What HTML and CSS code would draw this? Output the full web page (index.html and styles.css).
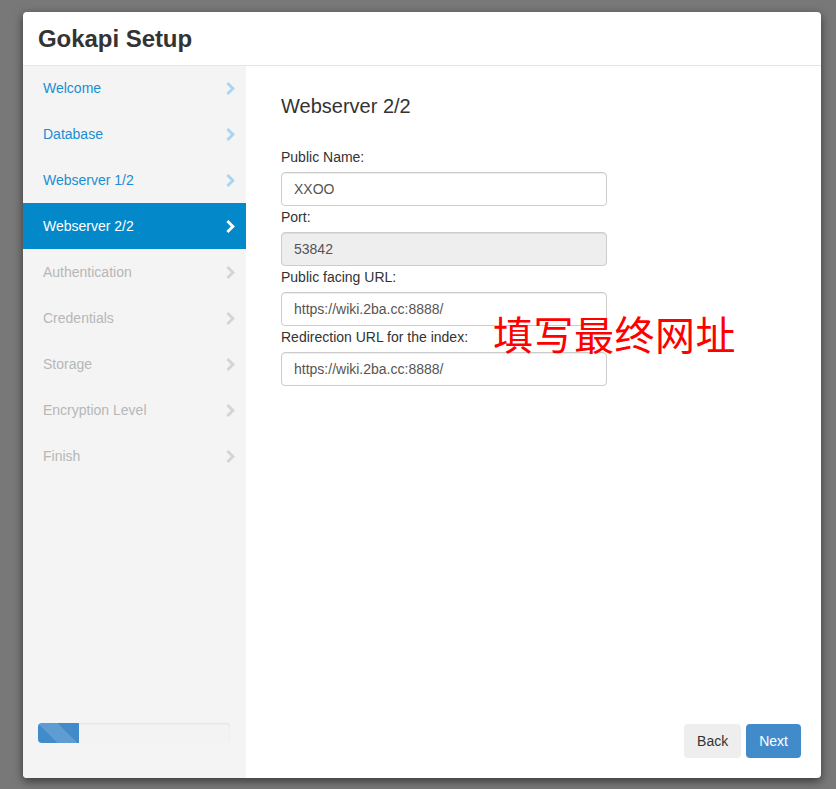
FILE: index.html
```html
<!DOCTYPE html>
<html lang="en">
<head>
<meta charset="utf-8">
<title>Gokapi Setup</title>
<link rel="stylesheet" href="styles.css">
</head>
<body>
<div class="modal">
  <div class="modal-header"><h1 class="title">Gokapi Setup</h1></div>
  <div class="modal-body">
    <aside class="sidebar">
      <ul class="steps">
        <li class="step done"><span>Welcome</span><svg class="chev" viewBox="0 0 10 14"><path d="M0 2.2 2.2 0 9.2 7 2.2 14 0 11.8 4.8 7z"/></svg></li>
        <li class="step done"><span>Database</span><svg class="chev" viewBox="0 0 10 14"><path d="M0 2.2 2.2 0 9.2 7 2.2 14 0 11.8 4.8 7z"/></svg></li>
        <li class="step done"><span>Webserver 1/2</span><svg class="chev" viewBox="0 0 10 14"><path d="M0 2.2 2.2 0 9.2 7 2.2 14 0 11.8 4.8 7z"/></svg></li>
        <li class="step current"><span>Webserver 2/2</span><svg class="chev" viewBox="0 0 10 14"><path d="M0 2.2 2.2 0 9.2 7 2.2 14 0 11.8 4.8 7z"/></svg></li>
        <li class="step todo"><span>Authentication</span><svg class="chev" viewBox="0 0 10 14"><path d="M0 2.2 2.2 0 9.2 7 2.2 14 0 11.8 4.8 7z"/></svg></li>
        <li class="step todo"><span>Credentials</span><svg class="chev" viewBox="0 0 10 14"><path d="M0 2.2 2.2 0 9.2 7 2.2 14 0 11.8 4.8 7z"/></svg></li>
        <li class="step todo"><span>Storage</span><svg class="chev" viewBox="0 0 10 14"><path d="M0 2.2 2.2 0 9.2 7 2.2 14 0 11.8 4.8 7z"/></svg></li>
        <li class="step todo"><span>Encryption Level</span><svg class="chev" viewBox="0 0 10 14"><path d="M0 2.2 2.2 0 9.2 7 2.2 14 0 11.8 4.8 7z"/></svg></li>
        <li class="step todo"><span>Finish</span><svg class="chev" viewBox="0 0 10 14"><path d="M0 2.2 2.2 0 9.2 7 2.2 14 0 11.8 4.8 7z"/></svg></li>
      </ul>
      <div class="progress"><div class="progress-bar" style="width:21.5%"></div></div>
    </aside>
    <main class="content">
      <h2 class="heading">Webserver 2/2</h2>
      <form class="form">
        <label class="label">Public Name:</label>
        <input class="input" type="text" value="XXOO">
        <label class="label">Port:</label>
        <input class="input" type="text" value="53842" disabled>
        <label class="label">Public facing URL:</label>
        <input class="input" type="text" value="https://wiki.2ba.cc:8888/">
        <label class="label">Redirection URL for the index:</label>
        <input class="input" type="text" value="https://wiki.2ba.cc:8888/">
      </form>
      <div class="annotation">填写最终网址</div>
      <div class="actions">
        <button class="btn btn-back" type="button">Back</button>
        <button class="btn btn-next" type="button">Next</button>
      </div>
    </main>
  </div>
</div>
</body>
</html>
```
FILE: styles.css
```css
* { box-sizing: border-box; }
html, body { margin: 0; height: 100%; }
body {
  background: #787878;
  font-family: "Liberation Sans", Arial, sans-serif;
  font-size: 14px;
  color: #333;
  padding: 12px 15px 11px 23px;
}
.modal {
  width: 798px;
  height: 766px;
  background: #fff;
  border-radius: 4px;
  box-shadow: 0 3px 10px rgba(0,0,0,0.55);
  display: flex;
  flex-direction: column;
  overflow: hidden;
}
.modal-header {
  height: 54px;
  border-bottom: 1px solid #e5e5e5;
  padding: 0 15px;
  display: flex;
  align-items: center;
  flex: none;
}
.title {
  margin: 1px 0 0;
  font-size: 24px;
  font-weight: bold;
  color: #333;
  letter-spacing: -0.05px;
}
.modal-body {
  flex: 1;
  display: flex;
  min-height: 0;
}
.sidebar {
  width: 223px;
  background: #f4f4f4;
  display: flex;
  flex-direction: column;
  justify-content: space-between;
  padding-bottom: 35px;
}
.steps { list-style: none; margin: -1px 0 0; padding: 0; }
.step {
  height: 46px;
  display: flex;
  align-items: center;
  justify-content: space-between;
  padding: 0 10px 0 20px;
  font-size: 14px;
}
.chev { width: 10px; height: 13px; }
.step.done { color: #1a8ed3; }
.step.done .chev { fill: #a9d5ef; }
.step.current { background: #0388ca; color: #fff; }
.step.current .chev { fill: #fff; }
.step.todo { color: #b7b7b7; }
.step.todo .chev { fill: #d4d4d4; }
.progress {
  margin: 0 16px 0 15px;
  height: 20px;
  background: #f3f3f3;
  border-radius: 4px;
  box-shadow: inset 0 1px 2px rgba(0,0,0,0.08);
  overflow: hidden;
}
.progress-bar {
  height: 100%;
  background-color: #428bca;
  background-image: linear-gradient(45deg, rgba(255,255,255,.15) 25%, transparent 25%, transparent 50%, rgba(255,255,255,.15) 50%, rgba(255,255,255,.15) 75%, transparent 75%, transparent);
  background-size: 40px 40px;
}
.content {
  flex: 1;
  position: relative;
  padding: 28px 20px 20px 35px;
  display: flex;
  flex-direction: column;
}
.heading {
  margin: 0 0 29px;
  font-size: 20px;
  font-weight: normal;
  color: #333;
  line-height: 24px;
}
.form {
  display: flex;
  flex-direction: column;
  width: 326px;
}
.label {
  display: block;
  line-height: 20px;
  margin-bottom: 5px;
  font-size: 14px;
  color: #333;
}
.input {
  height: 34px;
  border: 1px solid #ccc;
  border-radius: 4px;
  padding: 6px 12px;
  font-family: inherit;
  font-size: 14px;
  color: #555;
  background: #fff;
  box-shadow: inset 0 1px 1px rgba(0,0,0,.075);
}
.input + .label { margin-top: 1px; }
.input:disabled { background: #eee; color: #555; }
.annotation {
  position: absolute;
  left: 247px;
  top: 241px;
  font-family: "Noto Sans CJK SC", sans-serif;
  font-size: 40px;
  line-height: 52px;
  color: #ff0000;
  letter-spacing: 0.5px;
}
.actions {
  margin-top: auto;
  display: flex;
  justify-content: flex-end;
  gap: 5px;
}
.btn {
  height: 34px;
  border: none;
  border-radius: 4px;
  padding: 0 13px;
  font-family: inherit;
  font-size: 14px;
}
.btn-back { background: #eee; color: #333; }
.btn-next { background: #428bca; color: #fff; }
```
